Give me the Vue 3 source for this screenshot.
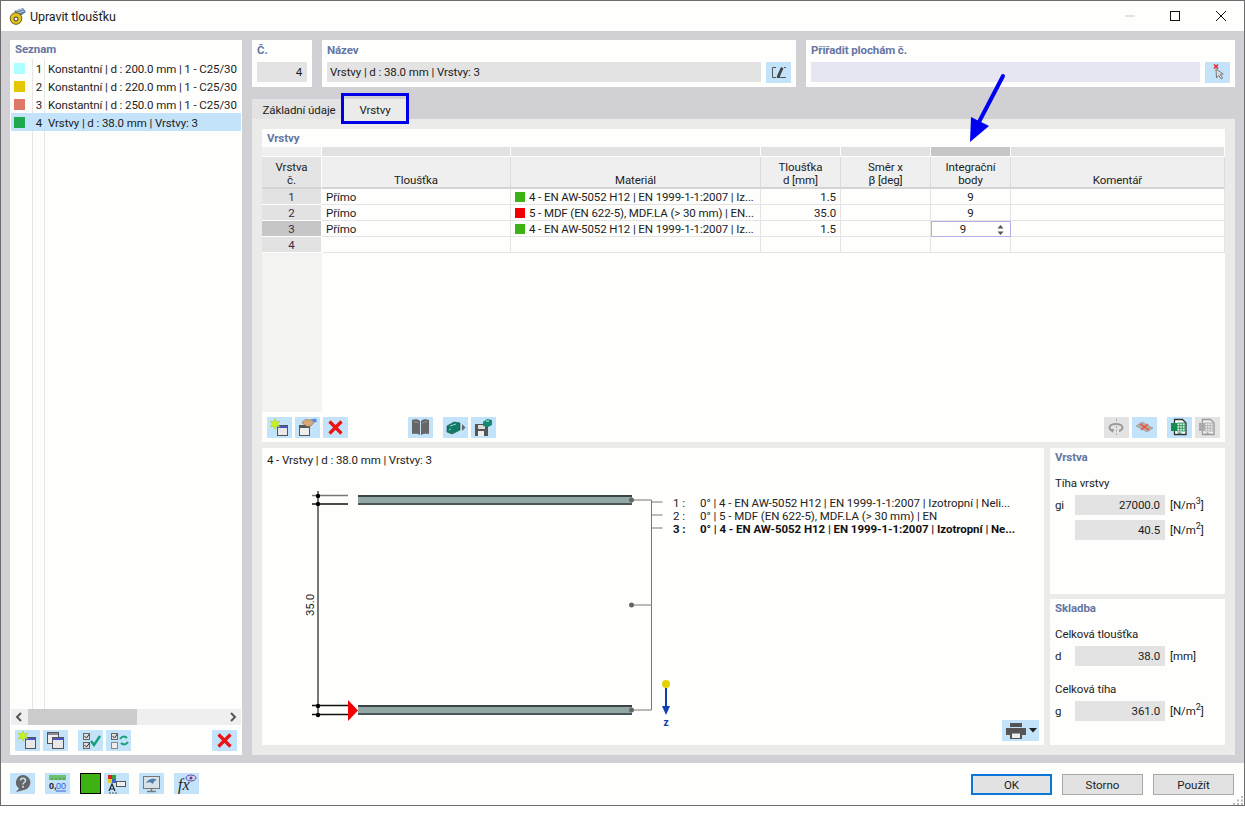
<script setup>
const sections = [
  { no: 1, color: '#aeffff', text: 'Konstantní | d : 200.0 mm | 1 - C25/30' },
  { no: 2, color: '#e6c600', text: 'Konstantní | d : 220.0 mm | 1 - C25/30' },
  { no: 3, color: '#e07868', text: 'Konstantní | d : 250.0 mm | 1 - C25/30' },
  { no: 4, color: '#1fa850', text: 'Vrstvy | d : 38.0 mm | Vrstvy: 3', selected: true }
]

const columns = [
  { lines: ['Vrstva', 'č.'] },
  { lines: ['Tloušťka'] },
  { lines: ['Materiál'] },
  { lines: ['Tloušťka', 'd [mm]'] },
  { lines: ['Směr x', 'β [deg]'] },
  { lines: ['Integrační', 'body'], active: true },
  { lines: ['Komentář'] }
]

const layers = [
  { no: 1, type: 'Přímo', swatch: '#3cb214', material: '4 - EN AW-5052 H12 | EN 1999-1-1:2007 | Iz...', d: '1.5', points: '9' },
  { no: 2, type: 'Přímo', swatch: '#f00000', material: '5 - MDF (EN 622-5), MDF.LA (> 30 mm) | EN...', d: '35.0', points: '9' },
  { no: 3, type: 'Přímo', swatch: '#3cb214', material: '4 - EN AW-5052 H12 | EN 1999-1-1:2007 | Iz...', d: '1.5', points: '9', editing: true },
  { no: 4, type: '', swatch: '', material: '', d: '', points: '' }
]
</script>

<template>
  <div class="window">
    <!-- Title bar -->
    <header class="titlebar">
      <svg class="app-icon" viewBox="0 0 18 18">
        <path d="M5 4l9-3 3 4-7 5z" fill="#5f7f9f" />
        <path d="M7 4l7-2M8 6l7-2" stroke="#c4d4e4" stroke-width="1" />
        <circle cx="7" cy="11.500" r="5.800" fill="#e2c21c" stroke="#6b5a10" />
        <circle cx="7" cy="12" r="2" fill="#fff" stroke="#333" />
      </svg>
      <span class="title">Upravit tloušťku</span>
      <div class="win-controls">
        <svg viewBox="0 0 46 30"><path d="M19 15h10" stroke="#c8c8c8" /></svg>
        <svg viewBox="0 0 46 30"><rect x="18.500" y="10.500" width="9" height="9" fill="none" stroke="#111" stroke-width="1" /></svg>
        <svg viewBox="0 0 46 30"><path d="M18 10l10 10M28 10l-10 10" stroke="#111" stroke-width="1" /></svg>
      </div>
    </header>

    <main class="body">
      <!-- Left list -->
      <aside class="panel list-panel">
        <h3 class="panel-title">Seznam</h3>
        <div class="list">
          <div v-for="s in sections" :key="s.no" class="list-row" :class="{ selected: s.selected }">
            <span class="swatch" :style="{ background: s.color }"></span>
            <span class="list-no">{{ s.no }}</span>
            <span class="list-text">{{ s.text }}</span>
          </div>
        </div>
        <div class="scrollbar">
          <svg viewBox="0 0 17 16"><path d="M10 4l-4 4 4 4" fill="none" stroke="#555" stroke-width="2" /></svg>
          <div class="scroll-track"><div class="scroll-thumb"></div></div>
          <svg viewBox="0 0 17 16"><path d="M7 4l4 4-4 4" fill="none" stroke="#555" stroke-width="2" /></svg>
        </div>
        <div class="list-tools">
          <button class="tb">
            <svg viewBox="0 0 25 21"><rect x="10.500" y="7.500" width="10" height="11" fill="#e8e8e8" stroke="#555" /><rect x="11" y="8" width="9" height="2" fill="#4a55c8" /><path d="M8 .5l1.300 3.200 3.700-.7-2.300 3 2.300 3-3.700-.7L8 11.500 6.700 8.300 3 9l2.300-3L3 3l3.700.7z" fill="#c8f020" stroke="#a0c018" stroke-width=".4" /></svg>
          </button>
          <button class="tb">
            <svg viewBox="0 0 25 21"><rect x="4.500" y="2.500" width="11" height="11" fill="#eee" stroke="#555" /><rect x="5" y="3" width="10" height="2" fill="#8a8a9a" /><rect x="9.500" y="7.500" width="11" height="11" fill="#e8e8e8" stroke="#555" /><rect x="10" y="8" width="10" height="2" fill="#4a55c8" /></svg>
          </button>
          <button class="tb gap-left">
            <svg viewBox="0 0 25 21"><rect x="5.500" y="3.500" width="6" height="6" fill="#ddd" stroke="#666" /><rect x="5.500" y="12.500" width="6" height="6" fill="#ddd" stroke="#666" /><path d="M6.500 6l2 2 3-4M6.500 15l2 2 3-4" fill="none" stroke="#333" /><path d="M13 11l3 4 6-9" fill="none" stroke="#14a078" stroke-width="2.400" /></svg>
          </button>
          <button class="tb">
            <svg viewBox="0 0 25 21"><rect x="5.500" y="3.500" width="6" height="6" fill="#ddd" stroke="#666" /><rect x="5.500" y="12.500" width="6" height="6" fill="#eee" stroke="#888" /><path d="M6.500 6l2 2 3-4" fill="none" stroke="#333" /><path d="M14 9c2-3 5-3 7-1M22 12c-2 3-5 3-7 1" fill="none" stroke="#14a078" stroke-width="2" /></svg>
          </button>
          <button class="tb push-right">
            <svg viewBox="0 0 25 21"><path d="M6.500 4.500l12 12M18.500 4.500l-12 12" stroke="#ee1111" stroke-width="3.200" /></svg>
          </button>
        </div>
      </aside>

      <section class="content">
        <!-- Top fields -->
        <div class="top-row">
          <div class="panel field-no">
            <h3 class="panel-title">Č.</h3>
            <div class="input right">4</div>
          </div>
          <div class="panel field-name">
            <h3 class="panel-title">Název</h3>
            <div class="input-row">
              <div class="input">Vrstvy | d : 38.0 mm | Vrstvy: 3</div>
              <button class="tb">
                <svg viewBox="0 0 25 21"><path d="M10 5.500H6.500v10H10M11 15.500h9M18 5.500h2" fill="none" stroke="#555" /><path d="M11 14l4-9 2.500 1.200-4 9-2.800 1z" fill="#444" /></svg>
              </button>
            </div>
          </div>
          <div class="panel field-assign">
            <h3 class="panel-title">Přiřadit plochám č.</h3>
            <div class="input-row">
              <div class="input lavender"></div>
              <button class="tb">
                <svg viewBox="0 0 25 21"><path d="M11 7l.5 9 2.200-2.500 2.500 3.500 1.500-1-2.500-3.500 3-.5z" fill="#ddd" stroke="#777" /><path d="M9 2.500l4 4M13 2.500l-4 4" stroke="#ee2222" stroke-width="1.500" /></svg>
              </button>
            </div>
          </div>
        </div>

        <!-- Tabs -->
        <div class="tabs">
          <div class="tab first">Základní údaje</div>
          <div class="tab active">Vrstvy</div>
          <div class="tab-mark"></div>
        </div>

        <div class="tab-body">
          <div class="panel layers">
            <h3 class="panel-title">Vrstvy</h3>
            <div class="table">
              <div v-for="(c, i) in columns" :key="'g' + i" class="group-cell" :class="{ active: c.active, blank: i === 0 }"></div>
              <div v-for="(c, i) in columns" :key="'h' + i" class="head-cell" :class="{ first: i === 0 }">
                <span v-for="l in c.lines" :key="l">{{ l }}</span>
              </div>
              <template v-for="r in layers" :key="r.no">
                <div class="row-no" :class="{ current: r.editing }">{{ r.no }}</div>
                <div class="cell">{{ r.type }}</div>
                <div class="cell">
                  <span v-if="r.swatch" class="mat-swatch" :style="{ background: r.swatch }"></span>
                  <span class="mat-text">{{ r.material }}</span>
                </div>
                <div class="cell right">{{ r.d }}</div>
                <div class="cell"></div>
                <div v-if="r.editing" class="cell editor">
                  <span>{{ r.points }}</span>
                  <svg viewBox="0 0 7 10"><path d="M3.500 0l3 3.500H.5zM3.500 10l-3-3.500h6z" fill="#555" /></svg>
                </div>
                <div v-else class="cell center">{{ r.points }}</div>
                <div class="cell"></div>
              </template>
            </div>
            <div class="table-fill"></div>
            <div class="table-tools">
              <button class="tb">
                <svg viewBox="0 0 25 21"><rect x="10.500" y="8.500" width="10" height="10" fill="#e8e8e8" stroke="#555" /><rect x="11" y="9" width="9" height="2" fill="#4a55c8" /><path d="M8 1.500l1.300 3.200 3.700-.7-2.300 3 2.300 3-3.700-.7L8 12.500 6.700 9.300 3 10l2.300-3L3 4l3.700.7z" fill="#c8f020" stroke="#a0c018" stroke-width=".4" /></svg>
              </button>
              <button class="tb">
                <svg viewBox="0 0 25 21"><rect x="4.500" y="8.500" width="10" height="10" fill="#eee" stroke="#555" /><rect x="5" y="9" width="9" height="2" fill="#555" /><path d="M7 6c1-3 4-4 7-3l4-.5 1 3-3 3.500-4 .5z" fill="#d8a878" stroke="#8a6a50" stroke-width=".6" /><path d="M16 2.500l5-1 1 3-3 1z" fill="#5a8ad8" /></svg>
              </button>
              <button class="tb">
                <svg viewBox="0 0 25 21"><path d="M6.500 4.500l12 12M18.500 4.500l-12 12" stroke="#ee1111" stroke-width="3.200" /></svg>
              </button>
              <button class="tb book">
                <svg viewBox="0 0 25 21"><path d="M4 3c3-1 6-1 8 1v14c-2-1.500-5-1.500-8-1zM21 3c-3-1-6-1-8 1v14c2-1.500 5-1.500 8-1z" fill="#666" /><path d="M6 5c2 0 3 0 4.500 1M19 5c-2 0-3 0-4.500 1" stroke="#aaa" /></svg>
              </button>
              <button class="tb export">
                <svg viewBox="0 0 25 21"><path d="M4 9l7-4 6 1v7l-8 4-5-2z" fill="#147a68" stroke="#0d5044" stroke-width=".6" /><path d="M7 9l6-2M6 13l2-1" stroke="#9ad8c8" /><path d="M19 7l3.500 3.500L19 14z" fill="#666" /></svg>
              </button>
              <button class="tb">
                <svg viewBox="0 0 25 21"><path d="M4 7h13v12H4z" fill="#555" /><rect x="7" y="8" width="7" height="4" fill="#ddd" /><rect x="7" y="14" width="6" height="5" fill="#eee" /><path d="M12 5l4-3 5 1v5l-4 2-5-1z" fill="#148a70" /><path d="M15 4h3" stroke="#bfe" /></svg>
              </button>
              <div class="tools-right">
                <button class="tb off">
                  <svg viewBox="0 0 25 21"><path d="M9 14c-5-1-5-7 3-7s8 6 3 7" fill="none" stroke="#999" stroke-width="2" /><path d="M12.500 2v17" stroke="#aaa" stroke-dasharray="2 1.500" /><path d="M6 12l4 0-1 4z" fill="#999" /></svg>
                </button>
                <button class="tb">
                  <svg viewBox="0 0 25 21"><path d="M4 9l6-4 11 6-6 4z" fill="#b8a8a0" stroke="#999" stroke-width=".6" /><path d="M8 7l9 6M16 7l-7 6" stroke="#f05040" stroke-width="1.400" /></svg>
                </button>
                <button class="tb sheet">
                  <svg viewBox="0 0 25 21"><path d="M7.500 2.500h8l3.500 3.500v11.500h-11.500z" fill="#fff" stroke="#333" stroke-width="1.300" /><rect x="4" y="6" width="6" height="8" fill="#178a50" /><path d="M10 6h8v8h-8zM10 8.700h8M10 11.300h8M12.700 6v8M15.300 6v8" fill="#dff0e4" stroke="#178a50" stroke-width=".8" /><path d="M10 15.500h5l-2.500 2z" fill="#178a50" /></svg>
                </button>
                <button class="tb off">
                  <svg viewBox="0 0 25 21"><path d="M7.500 2.500h8l3.500 3.500v11.500h-11.500z" fill="#eee" stroke="#999" stroke-width="1.300" /><rect x="4" y="6" width="6" height="8" fill="#aaa" /><path d="M10 6h8v8h-8zM10 8.700h8M10 11.300h8M12.700 6v8M15.300 6v8" fill="#eee" stroke="#aaa" stroke-width=".8" /><path d="M10 17h5l-2.500-2z" fill="#aaa" /></svg>
                </button>
              </div>
            </div>
          </div>

          <div class="lower">
            <!-- Cross-section preview -->
            <div class="panel preview">
              <p class="preview-title">4 - Vrstvy | d : 38.0 mm | Vrstvy: 3</p>
              <svg class="drawing" viewBox="262 470 782 275" width="782" height="275">
                <path d="M318 491v225" stroke="#777" stroke-width="2" />
                <path d="M312 495.500h36" stroke="#777" stroke-width="1.500" />
                <path d="M312 504h36M312 705.500h36M312 714.500h36" stroke="#111" stroke-width="1.500" />
                <circle cx="318" cy="496" r="2.200" fill="#000" />
                <circle cx="318" cy="504" r="2.200" fill="#000" />
                <circle cx="318" cy="706" r="2.200" fill="#000" />
                <circle cx="318" cy="715" r="2.200" fill="#000" />
                <text class="dim" transform="translate(314 616) rotate(-90)">35.0</text>

                <g v-for="y in [495, 705]" :key="y">
                  <rect x="358" :y="y" width="274" height="10" fill="#93a8a5" />
                  <rect x="358" :y="y" width="274" height="2" fill="#3a4548" />
                  <rect x="358" :y="y + 8" width="274" height="2" fill="#4a5558" />
                </g>
                <path d="M348 700l10 10.500-10 10.500z" fill="#f00000" />

                <path d="M632 500h19.500V710H632M632 605h19.500" fill="none" stroke="#777" />
                <circle cx="631.500" cy="500" r="2.500" fill="#666" />
                <circle cx="631.500" cy="605" r="2.500" fill="#666" />
                <circle cx="631.500" cy="710" r="2.500" fill="#666" />
                <path d="M651.500 502h11M651.500 515h11M651.500 528h11" stroke="#777" />

                <text class="lbl" x="673" y="507">1 :</text>
                <text class="lbl" x="700" y="507">0° | 4 - EN AW-5052 H12 | EN 1999-1-1:2007 | Izotropní | Neli...</text>
                <text class="lbl" x="673" y="520">2 :</text>
                <text class="lbl" x="700" y="520">0° | 5 - MDF (EN 622-5), MDF.LA (> 30 mm) | EN</text>
                <text class="lbl bold" x="673" y="533">3 :</text>
                <text class="lbl bold" x="700" y="533">0° | 4 - EN AW-5052 H12 | EN 1999-1-1:2007 | Izotropní | Ne...</text>

                <circle cx="666" cy="684" r="4" fill="#e6d000" />
                <path d="M666 688v20" stroke="#1040b0" stroke-width="2" />
                <path d="M662 706h8l-4 9z" fill="#1040b0" />
                <text class="axis" x="666" y="726">z</text>
              </svg>
              <button class="print">
                <svg viewBox="0 0 37 21"><path d="M8 3h12v4H8z" fill="#555" /><path d="M4 8h20v7h-4v4H8v-4H4z" fill="#555" /><rect x="9.500" y="13" width="9" height="5.500" fill="#eee" stroke="#555" /><path d="M27 8h8l-4 4.500z" fill="#222" /></svg>
              </button>
            </div>

            <div class="side">
              <div class="panel side-box">
                <h3 class="panel-title">Vrstva</h3>
                <p class="side-label">Tíha vrstvy</p>
                <div class="value-row">
                  <span class="sym">gi</span>
                  <div class="input right">27000.0</div>
                  <span class="unit">[N/m<sup>3</sup>]</span>
                </div>
                <div class="value-row">
                  <span class="sym"></span>
                  <div class="input right">40.5</div>
                  <span class="unit">[N/m<sup>2</sup>]</span>
                </div>
              </div>
              <div class="panel side-box">
                <h3 class="panel-title">Skladba</h3>
                <p class="side-label">Celková tloušťka</p>
                <div class="value-row">
                  <span class="sym">d</span>
                  <div class="input right">38.0</div>
                  <span class="unit">[mm]</span>
                </div>
                <p class="side-label second">Celková tíha</p>
                <div class="value-row">
                  <span class="sym">g</span>
                  <div class="input right">361.0</div>
                  <span class="unit">[N/m<sup>2</sup>]</span>
                </div>
              </div>
            </div>
          </div>
        </div>
      </section>
    </main>

    <!-- Bottom bar -->
    <footer class="footer">
      <button class="tb">
        <svg viewBox="0 0 25 21"><path d="M13 2a7.500 7.500 0 0 1 2 14.700L6 19l3-3.500A7.500 7.500 0 0 1 13 2z" fill="#666" /><path d="M10.500 7.500c0-3 5-3 5 0 0 2-2.500 2-2.500 4" fill="none" stroke="#c3e3fb" stroke-width="1.500" /><circle cx="13" cy="13.800" r="1" fill="#c3e3fb" /></svg>
      </button>
      <button class="tb gap10">
        <svg viewBox="0 0 25 21"><rect x="4" y="2" width="17" height="5" fill="#6cc070" /><path d="M7 5v2M11 5v2M15 5v2M19 5v2" stroke="#3a8a40" /><text class="units" x="4" y="16">0,</text><text class="units blue" x="11" y="16">00</text><path d="M11 18h10" stroke="#3a5ad8" /></svg>
      </button>
      <div class="color-box gap10"></div>
      <button class="tb">
        <svg viewBox="0 0 25 21"><rect x="4" y="2" width="4" height="4" fill="#e02020" /><rect x="8" y="2" width="4" height="4" fill="#30a030" /><rect x="4" y="6" width="4" height="4" fill="#e8d020" /><rect x="8" y="6" width="4" height="4" fill="#4060d0" /><rect x="12.500" y="8.500" width="9" height="5" fill="#eee" stroke="#555" /><path d="M5 18l3-7 3 7M6 16h4" fill="none" stroke="#222" stroke-width="1.200" /><path d="M5 20h2M8 20h2M11 20h2" stroke="#555" /></svg>
      </button>
      <button class="tb gap10">
        <svg viewBox="0 0 25 21"><rect x="4.500" y="3.500" width="16" height="12" fill="#d8e0e8" stroke="#777" /><path d="M7 10c3-5 8-5 11-3-2 0-3 1-4 4-2-2-4-2-7-1z" fill="#4a7fae" /><path d="M12.500 15.500V18M8 18.500h9" stroke="#777" stroke-width="1.400" /></svg>
      </button>
      <button class="tb gap10">
        <svg viewBox="0 0 25 21"><text class="fx" x="4" y="17">fx</text><ellipse cx="17" cy="5" rx="5" ry="3" fill="#d8d0e8" stroke="#6050a0" /><circle cx="17" cy="5" r="1.500" fill="#5040a0" /></svg>
      </button>
      <div class="actions">
        <button class="btn primary">OK</button>
        <button class="btn">Storno</button>
        <button class="btn">Použít</button>
      </div>
      <svg class="grip" viewBox="0 0 11 10"><path d="M8 1h2v2H8zM4 4.500h2v2H4zM8 4.500h2v2H8zM0 8h2v2H0zM4 8h2v2H4zM8 8h2v2H8z" fill="#bbb" /></svg>
    </footer>

    <!-- Annotation arrow over the dialog -->
    <svg class="callout" viewBox="0 0 60 80">
      <path d="M43 6L19 52" stroke="#0000f0" stroke-width="4" stroke-linecap="round" />
      <path d="M11 47l18 9-19 16z" fill="#0000f0" />
    </svg>
  </div>
</template>

<style scoped>
.window {
  position: relative;
  width: 1245px;
  height: 806px;
  box-sizing: border-box;
  display: flex;
  flex-direction: column;
  border: 1px solid #6d6d6d;
  background: #fefefc;
  font-family: Roboto, "Liberation Sans", sans-serif;
  font-size: 11.5px;
  letter-spacing: -0.1px;
  color: #1c1c1c;
  overflow: hidden;
}
.titlebar {
  height: 30px;
  flex: none;
  display: flex;
  align-items: center;
  padding-left: 8px;
}
.app-icon { width: 18px; height: 18px; }
.title { margin-left: 3px; font-size: 12.5px; }
.win-controls { margin-left: auto; display: flex; }
.win-controls svg { width: 46px; height: 30px; }

.body {
  flex: 1;
  min-height: 0;
  display: flex;
  gap: 10px;
  background: #d1d1d5;
  padding: 9px 9px 8px;
}
.panel { background: #fefefc; box-sizing: border-box; }
.panel-title {
  margin: 0;
  font-size: 11.5px;
  font-weight: 700;
  color: #6576a5;
  line-height: 16px;
}

/* left list */
.list-panel {
  width: 232px;
  flex: none;
  display: flex;
  flex-direction: column;
  padding: 1px 1px 0;
}
.list-panel .panel-title { padding: 0 4px; margin-top: 0; height: 18px; }
.list {
  flex: 1;
  min-height: 0;
  background:
    linear-gradient(#e6e6e6, #e6e6e6) 21px 0 / 1px 100% no-repeat,
    linear-gradient(#e6e6e6, #e6e6e6) 33px 0 / 1px 100% no-repeat;
}
.list-row {
  height: 18px;
  display: flex;
  align-items: center;
  white-space: nowrap;
  overflow: hidden;
}
.list-row.selected { background: #c3e3fb; }
.swatch { width: 11px; height: 11px; margin-left: 3px; flex: none; }
.list-no { width: 17px; text-align: right; flex: none; padding-top: 2px; }
.list-text { margin-left: 6px; padding-top: 2px; }
.scrollbar {
  height: 16px;
  flex: none;
  display: flex;
  background: #efefef;
}
.scrollbar svg { width: 17px; height: 16px; flex: none; }
.scroll-track { flex: 1; }
.scroll-thumb { width: 109px; height: 100%; background: #cbcbcb; }
.list-tools {
  flex: none;
  display: flex;
  gap: 3px;
  padding: 5px 4px 4px;
}
.gap-left { margin-left: 7px; }
.push-right { margin-left: auto; }

.tb {
  width: 25px;
  height: 21px;
  padding: 0;
  border: 0;
  flex: none;
  background: #c3e3fb;
  display: block;
}
.tb svg { width: 25px; height: 21px; display: block; }
.tb.off { background: #e3e3e3; }

/* right side */
.content { flex: 1; min-width: 0; display: flex; flex-direction: column; }
.top-row { display: flex; gap: 10px; height: 47px; flex: none; }
.top-row .panel { padding: 1px 5px 0; }
.field-no { width: 60px; }
.field-name { width: 474px; }
.field-assign { width: 429px; }
.top-row .panel-title { height: 21px; line-height: 16px; padding-top: 1px; box-sizing: border-box; }
.input {
  height: 20px;
  line-height: 21px;
  background: #e3e3e3;
  padding: 0 3px;
  box-sizing: border-box;
  white-space: nowrap;
}
.input.right { text-align: right; padding-right: 5px; }
.input.lavender { background: #e6e6f2; }
.input-row { display: flex; gap: 5px; }
.input-row .input { flex: 1; }

.tabs { position: relative; display: flex; margin-top: 12px; height: 20px; flex: none; }
.tab {
  width: 68px;
  line-height: 22px;
  text-align: center;
  background: #e3e3e3;
  white-space: nowrap;
}
.tab.first { width: 89px; padding-left: 5px; box-sizing: border-box; }
.tab.active { background: #ebebe9; }
.tab-mark {
  position: absolute;
  left: 89px;
  top: -6px;
  width: 68px;
  height: 31px;
  box-sizing: border-box;
  border: 3px solid #0000e6;
}
.tab-body {
  flex: 1;
  min-height: 0;
  background: #ebebe9;
  padding: 10px;
  display: flex;
  flex-direction: column;
  gap: 6px;
}

.layers {
  height: 313px;
  flex: none;
  display: flex;
  flex-direction: column;
}
.layers > .panel-title { padding: 1px 5px 0; height: 18px; box-sizing: border-box; }
.table {
  display: grid;
  grid-template-columns: 60px 189px 250px 80px 90px 80px 214px;
  grid-template-rows: 10px 32px repeat(4, 16px);
  flex: none;
}
.group-cell {
  background: #e2e2e2;
  border-right: 1px solid #fefefc;
  border-bottom: 1px solid #fefefc;
}
.group-cell.blank { background: #efefef; }
.group-cell.active { background: #c6c6c6; }
.head-cell {
  background: #efefef;
  border-right: 1px solid #dcdcdc;
  border-bottom: 2px solid #d4d4d4;
  display: flex;
  flex-direction: column;
  justify-content: flex-end;
  align-items: center;
  line-height: 13px;
  box-sizing: border-box;
  color: #222;
}
.head-cell.first { background: #e4e4e4; border-right-color: #fefefc; }
.row-no {
  background: #e2e2e2;
  border-right: 1px solid #fefefc;
  border-bottom: 1px solid #fefefc;
  text-align: center;
  line-height: 17px;
  color: #3a2a4a;
}
.row-no.current { background: #c6c6c6; }
.cell {
  border-right: 1px solid #e4e4e4;
  border-bottom: 1px solid #e4e4e4;
  line-height: 15px;
  padding: 1px 4px 0;
  box-sizing: border-box;
  white-space: nowrap;
  overflow: hidden;
  display: flex;
  align-items: center;
}
.cell.right { justify-content: flex-end; }
.cell.center { justify-content: center; }
.mat-swatch { width: 10px; height: 10px; flex: none; margin-right: 4px; margin-top: -1px; }
.mat-text { overflow: hidden; }
.cell.editor {
  border: 1px solid #b4aee8;
  padding: 1px 3px 0 0;
  position: relative;
}
.cell.editor span { width: 62px; text-align: center; }
.cell.editor svg { width: 7px; height: 10px; margin-left: 3px; }
.table-fill {
  flex: 1;
  background: linear-gradient(#f3f3f1, #f3f3f1) 0 0 / 60px 100% no-repeat;
}
.table-tools {
  height: 30px;
  flex: none;
  display: flex;
  gap: 3px;
  padding: 5px 5px 4px;
  box-sizing: border-box;
}
.table-tools .book { margin-left: 57px; }
.table-tools .export { margin-left: 7px; }
.tools-right { margin-left: auto; display: flex; gap: 3px; }
.tools-right .sheet { margin-left: 7px; }

.lower { flex: 1; min-height: 0; display: flex; gap: 6px; }
.preview { position: relative; width: 782px; flex: none; }
.preview-title { margin: 0; padding: 4px 5px 0; line-height: 16px; height: 22px; box-sizing: border-box; }
.drawing { display: block; }
.dim { font-size: 11.5px; fill: #222; }
.lbl { font-size: 11.5px; fill: #222; letter-spacing: -0.05px; }
.lbl.bold { font-weight: 700; fill: #111; }
.axis { font-size: 10px; font-weight: 700; fill: #1040b0; text-anchor: middle; }
.print {
  position: absolute;
  right: 5px;
  bottom: 4px;
  width: 37px;
  height: 21px;
  padding: 0;
  border: 0;
  background: #c3e3fb;
}
.print svg { width: 37px; height: 21px; display: block; }

.side { flex: 1; display: flex; flex-direction: column; gap: 5px; }
.side-box { flex: 1; padding: 1px 5px 0; }
.side-label { margin: 10px 0 4px; line-height: 16px; }
.side-label.second { margin-top: 15px; }
.value-row { display: flex; align-items: center; margin-bottom: 5px; }
.value-row .sym { width: 20px; flex: none; }
.value-row .input { width: 90px; flex: none; }
.value-row .unit { margin-left: 5px; white-space: nowrap; }
.unit sup { font-size: 9px; line-height: 0; }

.footer {
  position: relative;
  height: 42px;
  flex: none;
  display: flex;
  align-items: center;
  padding: 0 10px 1px 9px;
  box-sizing: border-box;
}
.gap10 { margin-left: 10px; }
.color-box {
  width: 21px;
  height: 21px;
  box-sizing: border-box;
  border: 1px solid #000;
  background: #3cb214;
  margin-right: 3px;
}
.units { font-size: 9px; font-weight: 700; fill: #222; }
.units.blue { fill: #3a5ad8; font-weight: 400; }
.fx { font-family: "Liberation Serif", serif; font-style: italic; font-size: 16px; fill: #222; }
.actions { margin-left: auto; margin-top: 2px; display: flex; gap: 10px; }
.btn {
  width: 81px;
  height: 21px;
  padding: 0;
  border: 1px solid #a8a8a8;
  background: #e2e2e2;
  font: inherit;
  color: #1c1c1c;
}
.btn.primary { border: 2px solid #0a78d8; }
.grip { position: absolute; right: 0; bottom: 0; width: 11px; height: 10px; }

.callout {
  position: absolute;
  left: 959px;
  top: 69px;
  width: 60px;
  height: 80px;
  pointer-events: none;
}
</style>

<style>
html, body { background: #fff; }
</style>
